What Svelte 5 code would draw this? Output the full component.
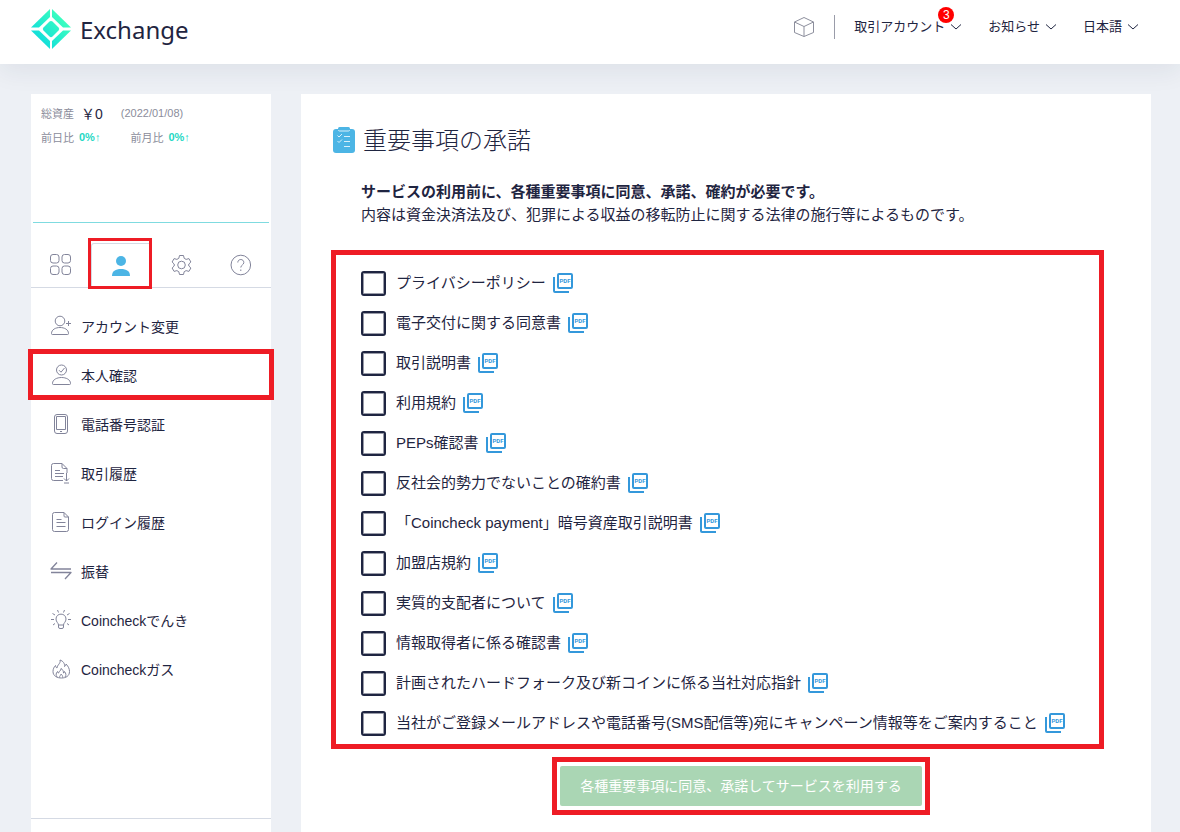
<script lang="ts">
    type MenuItem = { label: string; icon: string; current?: boolean };

    const headerMenus = [
        { label: '取引アカウント', badge: 3 },
        { label: 'お知らせ', badge: 0 },
        { label: '日本語', badge: 0 },
    ];

    const tabs = [
        { label: 'ダッシュボード', icon: 'grid' },
        { label: 'アカウント', icon: 'person' },
        { label: '設定', icon: 'gear' },
        { label: 'ヘルプ', icon: 'help' },
    ];

    const menu: MenuItem[] = [
        { label: 'アカウント変更', icon: 'user-plus' },
        { label: '本人確認', icon: 'user-check', current: true },
        { label: '電話番号認証', icon: 'phone' },
        { label: '取引履歴', icon: 'doc-down' },
        { label: 'ログイン履歴', icon: 'doc' },
        { label: '振替', icon: 'transfer' },
        { label: 'Coincheckでんき', icon: 'bulb' },
        { label: 'Coincheckガス', icon: 'flame' },
    ];

    let documents = $state([
        'プライバシーポリシー',
        '電子交付に関する同意書',
        '取引説明書',
        '利用規約',
        'PEPs確認書',
        '反社会的勢力でないことの確約書',
        '「Coincheck payment」暗号資産取引説明書',
        '加盟店規約',
        '実質的支配者について',
        '情報取得者に係る確認書',
        '計画されたハードフォーク及び新コインに係る当社対応指針',
        '当社がご登録メールアドレスや電話番号(SMS配信等)宛にキャンペーン情報等をご案内すること',
    ].map((label) => ({ label, agreed: false })));

    let activeTab = $state('person');
    let allAgreed = $derived(documents.every((d) => d.agreed));
</script>

{#snippet icon(name: string)}
    <svg class="icon" viewBox="0 0 22 22" aria-hidden="true">
        {#if name === 'grid'}
            <rect x="0.5" y="0.5" width="8.500" height="8.500" rx="2.5" />
            <rect x="12" y="0.5" width="8.500" height="8.500" rx="2.5" />
            <rect x="0.5" y="12" width="8.500" height="8.500" rx="2.5" />
            <rect x="12" y="12" width="8.500" height="8.500" rx="2.5" />
        {:else if name === 'person'}
            <g class="solid">
                <circle cx="11" cy="6" r="5" />
                <path d="M2 21c0-5 3.500-7 9-7s9 2 9 7z" />
            </g>
        {:else if name === 'gear'}
            <circle cx="10.500" cy="11" r="3.800" />
            <path d="M8.500 1.500h4l.7 2.800 1.900 1.100 2.800-.8 2 3.400-2.100 2v2l2.100 2-2 3.400-2.800-.8-1.900 1.100-.7 2.800h-4l-.7-2.800-1.900-1.100-2.800.8-2-3.400 2.100-2v-2l-2.100-2 2-3.400 2.800.8 1.900-1.100z" />
        {:else if name === 'help'}
            <circle cx="10.800" cy="11" r="9.800" />
            <path d="M7.800 8.500c0-4 6-4 6 0 0 2.500-3 2.500-3 5M10.800 15.500v1.500" />
        {:else if name === 'user-plus'}
            <circle cx="10" cy="6" r="4.800" />
            <path d="M1.500 18.500c0-8 17-8 17 0q0 1-.8 1H2.300q-.8 0-.8-1zM18.500 6v5M16 8.500h5" />
        {:else if name === 'user-check'}
            <circle cx="11.500" cy="6" r="5" />
            <path d="M9 6.200l2 2 3.500-4.200M2.500 19.500c0-8 18-8 18 0q0 1-.8 1H3.300q-.8 0-.8-1z" />
        {:else if name === 'phone'}
            <rect x="4.500" y="1.500" width="13" height="19" rx="2.500" />
            <path d="M6.500 3.500h9v13h-9zM10 18.500h2" />
        {:else if name === 'doc-down'}
            <path d="M13 18.500H3.500q-2 0-2-2v-13q0-2 2-2H12l5 5V11M12 1.500V5q0 1.500 1.500 1.500H17M5 8.500h5M5 11.500h9M5 14.500h8M16.500 11v8M14 16.500l2.500 2.500 2.500-2.500M14 21h5" />
        {:else if name === 'doc'}
            <path d="M4.500 1.500H14l4.500 4.500v12.500q0 2-2 2h-12q-2 0-2-2v-15q0-2 2-2zM14 1.500V5q0 1 1 1h3.500M6.500 8.500h5M6.500 11.500h9M6.500 15.500h9" />
        {:else if name === 'transfer'}
            <path d="M7 2.500L1 9h20M1 12.500h20L15 19" stroke-width="1.300" />
        {:else if name === 'bulb'}
            <path d="M8.500 16c0-2-2.500-3-2.500-6 0-6.500 10-6.500 10 0 0 3-2.500 4-2.500 6zM8.500 16v2q0 1.500 1.500 1.500h2q1.500 0 1.500-1.500v-2M1 10.500h3M18 10.500h3M8.500 3.500L7.500 1M13.500 3.500l1-2.500M5 6L2.500 4.500M17 6l2.500-1.500M5 14.500L3 16M17 14.500l2 1.500" />
        {:else if name === 'flame'}
            <path d="M10 2c3 1 5 3.500 4.500 6.500 1-.5 1.500-1.500 1.500-2.500 2.500 2.500 3.500 5 3.500 7.500 0 4.500-3.500 6.500-8 6.500s-8.500-2-8.500-6.500c0-2.500 1-4.500 2.500-6 0 1 .5 2 1.500 2.500C7 7 11 5.500 10 2zM7 19c-1.500-2-1-4 .5-5.500 0 1 .5 1.500 1 1.500.500-2 2.500-2 2.500-4.500 2 1 2.500 3 2.500 4.500.5 0 1-.5 1-1.500 1.500 2 2 3.500.5 5.500M9.500 19.500c0-2 1.500-2 1.500-3.500 1 1 2 2 1.500 3.500" />
        {/if}
    </svg>
{/snippet}

<div class="page">
    <header class="header">
        <a class="brand" href="#top">
            <svg class="logo" viewBox="0 0 40 40" aria-hidden="true">
                <defs>
                    <linearGradient id="mint" gradientUnits="userSpaceOnUse" x1="6" y1="32" x2="32" y2="8">
                        <stop offset="0" stop-color="#0fdcdc" />
                        <stop offset="1" stop-color="#3dffbe" />
                    </linearGradient>
                </defs>
                <g fill="url(#mint)">
                    <path d="M19 0v8L8 18.500 0 18.500z" />
                    <path d="M21 0v8l11 10.500 8 0z" />
                    <path d="M19 40v-8L8 21.500 0 21.500z" />
                    <path d="M21 40v-8l11-10.500 8 0z" />
                    <path d="M20 12q1 0 1.500.5l6 6q1.500 1.500 0 3l-6 6q-1.500 1.500-3 0l-6-6q-1.500-1.500 0-3l6-6q.5-.5 1.500-.5z" />
                </g>
            </svg>
            <span>Exchange</span>
        </a>
        <nav class="header-nav">
            <a class="cube" href="#wallet" aria-label="ウォレット">
                <svg viewBox="0 0 22 22" aria-hidden="true">
                    <path d="M11 1.500L20.500 6v10.500L11 20.500 1.500 16.500V6zM1.500 6L11 10.500 20.500 6M11 10.500v10" />
                </svg>
            </a>
            <span class="divider"></span>
            {#each headerMenus as item}
                <button class="dropdown" type="button">
                    <span class="text">{item.label}</span>
                    <svg class="chevron" viewBox="0 0 10 6" aria-hidden="true"><path d="M0 .5l5 4.500 5-4.500" /></svg>
                    {#if item.badge}
                        <span class="badge">{item.badge}</span>
                    {/if}
                </button>
            {/each}
        </nav>
    </header>

    <div class="body">
        <aside class="sidebar">
            <div class="summary">
                <div class="row">
                    <span>総資産</span>
                    <span class="amount">￥0</span>
                    <span class="date">(2022/01/08)</span>
                </div>
                <div class="row">
                    <span>前日比</span>
                    <span class="rate">0%↑</span>
                    <span class="month">前月比</span>
                    <span class="rate">0%↑</span>
                </div>
            </div>
            <div class="tabs">
                {#each tabs as tab}
                    <button
                        type="button"
                        class="tab"
                        class:active={activeTab === tab.icon}
                        aria-label={tab.label}
                        onclick={() => (activeTab = tab.icon)}>
                        {@render icon(tab.icon)}
                    </button>
                {/each}
            </div>
            <nav class="menu">
                {#each menu as item}
                    <a href="#menu" class:current={item.current}>
                        {@render icon(item.icon)}
                        {item.label}
                    </a>
                {/each}
            </nav>
        </aside>

        <main class="panel">
            <h1>
                <svg class="clipboard" viewBox="0 0 22 26" aria-hidden="true">
                    <rect y="2" width="22" height="24" rx="3" fill="#4cb5e5" />
                    <rect x="5" width="12" height="4" rx="1.500" fill="#4cb5e5" />
                    <path d="M5.500 3q0 1 1 1h9q1 0 1-1M4.500 8.500l1.500 1.500L9 7M4.500 14l1.500 1.500 3-3M11 9.500h6M11 14.500h6M11 19.500h6" />
                </svg>
                <span class="text">重要事項の承諾</span>
            </h1>
            <p class="lead">
                <strong>サービスの利用前に、各種重要事項に同意、承諾、確約が必要です。</strong><br />
                内容は資金決済法及び、犯罪による収益の移転防止に関する法律の施行等によるものです。
            </p>
            <ul class="documents">
                {#each documents as doc}
                    <li>
                        <label>
                            <input type="checkbox" bind:checked={doc.agreed} />
                            <span class="text">{doc.label}</span>
                        </label>
                        <a href="#pdf" aria-label="{doc.label} PDF">
                            <svg class="pdf" viewBox="0 0 20 20">
                                <rect x="5" y="1" width="14" height="14" rx="1" />
                                <path d="M1 4v14q0 1 1 1h14" />
                                <text x="12" y="10" text-anchor="middle">PDF</text>
                            </svg>
                        </a>
                    </li>
                {/each}
            </ul>
            <div class="submit">
                <button type="button" class:ready={allAgreed}>各種重要事項に同意、承諾してサービスを利用する</button>
            </div>
        </main>
    </div>
</div>

<style>
    :global(body) {
        margin: 0;
        background: #edf0f5;
    }
    .page {
        --ink: #1f2541;
        --line: #d5dae4;
        --mark: #ee1c25;
        display: flex;
        flex-direction: column;
        min-height: 100vh;
        color: var(--ink);
        font-family: "Liberation Sans", "Noto Sans CJK JP", sans-serif;
        font-size: 14px;
    }
    .page *,
    .page *::after {
        box-sizing: border-box;
    }
    a {
        color: inherit;
        text-decoration: none;
    }
    button {
        font: inherit;
        color: inherit;
        border: none;
        background: none;
        padding: 0;
        cursor: pointer;
    }
    svg {
        display: block;
        flex-shrink: 0;
    }
    .text {
        padding-bottom: 3px;
    }

    .header {
        display: flex;
        justify-content: space-between;
        align-items: flex-start;
        height: 64px;
        padding: 0 42px 0 31px;
        background: #fff;
        box-shadow: 0 8px 24px rgba(31, 37, 65, 0.07);
    }
    .brand {
        display: flex;
        align-items: center;
        gap: 9px;
        height: 58px;
        font-family: "Noto Sans", sans-serif;
        font-size: 24px;
    }
    .logo {
        width: 40px;
        height: 40px;
    }
    .header-nav {
        display: flex;
        align-items: center;
        height: 54px;
        font-size: 13px;
    }
    .cube svg {
        width: 22px;
        height: 22px;
        fill: none;
        stroke: #8d8f9d;
    }
    .divider {
        width: 1px;
        height: 24px;
        margin: 0 19px 0 19px;
        background: #9a9ca9;
    }
    .dropdown {
        position: relative;
        display: flex;
        align-items: center;
        gap: 6px;
    }
    .dropdown + .dropdown {
        margin-left: 27px;
    }
    .chevron {
        width: 10px;
        height: 6px;
        fill: none;
        stroke: var(--ink);
    }
    .badge {
        position: absolute;
        top: -9px;
        right: 7px;
        width: 16px;
        height: 16px;
        border-radius: 50%;
        background: #f00;
        color: #fff;
        font-size: 12px;
        line-height: 16px;
        text-align: center;
    }

    .body {
        flex: 1;
        display: grid;
        grid-template-columns: 240px 1fr;
        gap: 30px;
        padding: 30px 29px 0 31px;
    }
    .sidebar,
    .panel {
        background: #fff;
    }

    .summary {
        height: 129px;
        margin: 0 2px;
        padding: 7px 8px 0;
        border-bottom: 1px solid #7fdbe0;
        color: #8b8d9b;
        font-size: 11px;
    }
    .row {
        display: flex;
        align-items: center;
        height: 24px;
    }
    .amount {
        margin-left: 7px;
        color: var(--ink);
        font-size: 14px;
    }
    .date {
        margin-left: 18px;
    }
    .rate {
        margin-left: 5px;
        color: #1fd8c4;
        font-weight: 700;
    }
    .month {
        margin-left: 30px;
    }

    .tabs {
        display: flex;
        height: 65px;
        padding-top: 20px;
        border-bottom: 1px solid var(--line);
    }
    .tab {
        position: relative;
        flex: 1;
        display: flex;
        align-items: center;
        justify-content: center;
    }
    .icon {
        width: 22px;
        height: 22px;
        fill: none;
        stroke: #82849a;
        stroke-linejoin: round;
    }
    .solid {
        fill: #4cb5e5;
        stroke: none;
    }
    .tab.active {
        border: 1px solid var(--line);
        border-bottom: none;
        border-radius: 3px 3px 0 0;
    }
    .tab.active::after {
        content: "";
        position: absolute;
        inset: -6px -1px -2px -4px;
        border: 3px solid var(--mark);
    }

    .menu {
        padding: 15px 0 123px;
        border-bottom: 1px solid var(--line);
    }
    .menu a {
        display: flex;
        align-items: center;
        gap: 9px;
        height: 45px;
        margin-bottom: 4px;
        padding-left: 19px;
    }
    .menu a.current {
        outline: 5px solid var(--mark);
        outline-offset: -2px;
    }

    .panel {
        padding: 26px 0 17px 30px;
    }
    h1 {
        display: flex;
        align-items: center;
        gap: 8px;
        height: 40px;
        margin: 0;
        padding-left: 2px;
        font-size: 24px;
        font-weight: 300;
    }
    .clipboard {
        width: 22px;
        height: 26px;
    }
    .clipboard path {
        fill: none;
        stroke: #d8f0fb;
    }
    .lead {
        margin: 20px 0 24px;
        padding-left: 30px;
        font-size: 15px;
        line-height: 23px;
    }
    .documents {
        margin: 0 47px 8px 0;
        padding: 8px 25px 1px;
        border: 5px solid var(--mark);
        list-style: none;
        font-size: 15px;
    }
    .documents li {
        display: flex;
        align-items: center;
        gap: 7px;
        min-height: 40px;
    }
    label {
        display: flex;
        align-items: center;
        gap: 10px;
    }
    input {
        appearance: none;
        flex-shrink: 0;
        width: 25px;
        height: 25px;
        margin: 0;
        border: 2px solid var(--ink);
        border-radius: 3px;
        box-shadow: inset 0 0 0 1px #9a9ca9;
    }
    input:checked {
        background: #4cb5e5;
    }
    .pdf {
        width: 20px;
        height: 20px;
        fill: none;
        stroke: #3498db;
        stroke-width: 2;
    }
    .pdf text {
        fill: #3498db;
        stroke: none;
        font-family: Roboto, sans-serif;
        font-size: 6px;
        font-weight: 700;
    }
    .submit {
        width: fit-content;
        margin: 0 auto;
        padding: 4px 3px;
        border: 5px solid var(--mark);
    }
    .submit button {
        height: 40px;
        padding: 0 20px 2px;
        border-radius: 2px;
        background: #aad6b4;
        color: #fff;
    }
    .submit button.ready {
        background: #4caf66;
    }
</style>
